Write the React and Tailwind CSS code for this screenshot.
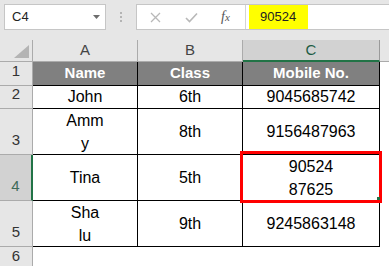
import React from "react";

const rows = [
  { n: 1, h: "h-[24px]", head: true, cells: ["Name", "Class", "Mobile No."] },
  { n: 2, h: "h-[23px]", cells: ["John", "6th", "9045685742"] },
  { n: 3, h: "h-[46px]", cells: [["Amm", "y"], "8th", "9156487963"] },
  { n: 4, h: "h-[46px]", sel: true, cells: ["Tina", "5th", ["90524", "87625"]] },
  { n: 5, h: "h-[46px]", cells: [["Sha", "lu"], "9th", "9245863148"] },
];

const widths = ["w-[105px]", "w-[105px]", "w-[137px]"];

function CellText({ v }) {
  if (Array.isArray(v)) {
    return (
      <div className="flex flex-col items-center leading-[23px]">
        {v.map((t) => (
          <span key={t}>{t}</span>
        ))}
      </div>
    );
  }
  return <span>{v}</span>;
}

export default function App() {
  return (
    <div className="relative w-[389px] h-[266px] overflow-hidden bg-white font-['Liberation_Sans',Arial,sans-serif] text-black">
      {/* Toolbar */}
      <div className="flex h-[40px] bg-[#e6e6e6] pt-[4px] pl-[4px] items-start">
        <div className="flex items-center justify-between w-[102px] h-[26px] bg-white border border-[#c6c6c6] pl-[7px] pr-[5px]">
          <span className="text-[13px] text-[#222]">C4</span>
          <svg width="7" height="4" viewBox="0 0 7 4">
            <path d="M0 0H7L3.5 4Z" fill="#6d6d6d" />
          </svg>
        </div>
        <div className="flex w-[30px] h-[26px] items-center justify-center">
          <div className="flex flex-col gap-[2px]">
            <div className="w-[2px] h-[2px] bg-[#b4b4b4]" />
            <div className="w-[2px] h-[2px] bg-[#b4b4b4]" />
            <div className="w-[2px] h-[2px] bg-[#b4b4b4]" />
          </div>
        </div>
        <div className="flex flex-1 h-[26px] bg-white border border-[#c6c6c6] border-r-0">
          <div className="flex items-center w-[109px] h-full border-r border-[#d4d4d4]">
            <svg className="ml-[13px]" width="11" height="11" viewBox="0 0 11 11">
              <path d="M1 1L10 10M10 1L1 10" stroke="#b8b8b8" strokeWidth="1.3" />
            </svg>
            <svg className="ml-[24px]" width="13" height="11" viewBox="0 0 13 11">
              <path d="M1 6L4.5 9.5L12 1.5" stroke="#b8b8b8" strokeWidth="1.6" fill="none" />
            </svg>
            <span className="ml-[23px] font-['Liberation_Serif',serif] italic text-[14px] text-[#555] leading-none">
              f<span className="text-[11px]">x</span>
            </span>
          </div>
          <div className="ml-[3px] flex items-center w-[59px] h-full bg-[#ffff00] pl-[11px]">
            <span className="text-[13px] text-[#222]">90524</span>
          </div>
        </div>
      </div>

      {/* Column headers */}
      <div className="flex h-[22px] bg-[#e6e6e6] text-[15px] text-[#444]">
        <div className="relative w-[33px] h-full border-r border-b border-[#ababab]">
          <svg className="absolute left-[14px] top-[5px]" width="15" height="13" viewBox="0 0 15 13">
            <path d="M15 0V13H0Z" fill="#b4b4b4" />
          </svg>
        </div>
        <div className="flex w-[105px] h-full items-center justify-center border-r border-b border-[#ababab]">A</div>
        <div className="flex w-[105px] h-full items-center justify-center border-r border-b border-[#ababab]">B</div>
        <div className="flex w-[137px] h-full items-center justify-center bg-[#d2d2d2] border-r border-r-[#9a9a9a] border-b-2 border-b-[#217346] text-[#1e5c45]">C</div>
        <div className="flex-1 h-full border-b border-[#ababab]" />
      </div>

      {/* Rows */}
      {rows.map((r) => (
        <div key={r.n} className={`flex ${r.h}`}>
          <div
            className={
              r.sel
                ? "flex w-[33px] h-full items-end justify-center pb-[3px] bg-[#d2d2d2] border-b border-b-[#ababab] border-r-2 border-r-[#217346] text-[15px] text-[#3f6b5a]"
                : "flex w-[33px] h-full items-end justify-center pb-[3px] bg-[#e6e6e6] border-b border-r border-[#ababab] text-[15px] text-[#333]"
            }
          >
            {r.n}
          </div>
          {r.cells.map((c, i) => (
            <div
              key={i}
              className={
                r.head
                  ? `flex ${widths[i]} h-full items-center justify-center bg-[#808080] border-r border-b border-black text-white font-bold text-[15px]`
                  : `flex ${widths[i]} h-full items-center justify-center bg-white border-r border-b border-black text-[16px]`
              }
            >
              <CellText v={c} />
            </div>
          ))}
          <div className="flex-1 h-full bg-white" />
        </div>
      ))}

      {/* Row 6 */}
      <div className="flex h-[20px]">
        <div className="flex w-[33px] h-full items-end justify-center bg-[#e6e6e6] border-r border-[#ababab] text-[15px] text-[#333]">
          6
        </div>
        <div className="flex-1 h-full bg-white" />
      </div>

      {/* Selection overlay */}
      <div className="absolute left-[240px] top-[151px] w-[142px] h-[52px] border-[3px] border-[#ff0000]" />
      <div className="absolute left-[377px] top-[197px] w-[3px] h-[3px] bg-[#217346]" />
    </div>
  );
}
